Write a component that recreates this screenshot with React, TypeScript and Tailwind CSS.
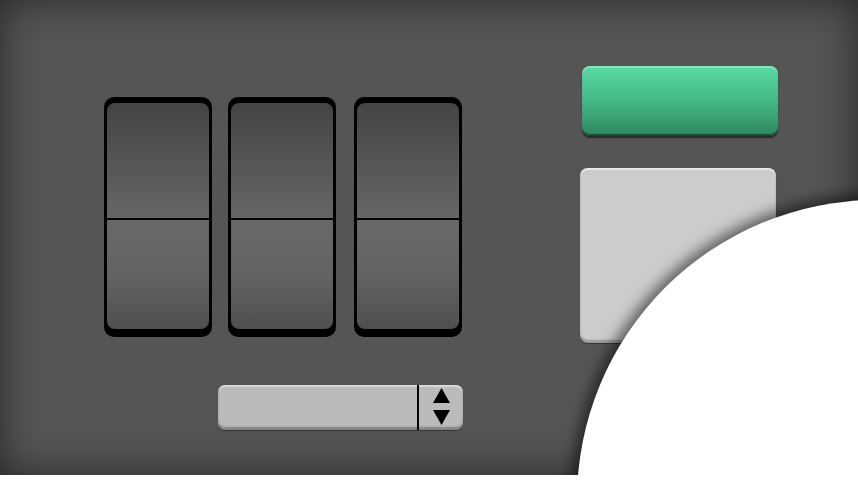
import React from "react";

function FlipCard({ className = "" }: { className?: string }) {
  return (
    <div className={`w-[108px] h-[240px] rounded-[10px] bg-black pt-[6px] px-[3px] pb-[8px] ${className}`}>
      <div className="flex h-full flex-col overflow-hidden rounded-[8px]">
        <div className="h-[115px] bg-gradient-to-b from-[#444444] to-[#666666]" />
        <div className="mx-[1px] h-[2px] bg-black" />
        <div className="flex-1 bg-gradient-to-b from-[#686868] via-[#636363] to-[#4f4f4f]" />
      </div>
    </div>
  );
}

function Stepper() {
  return (
    <div className="flex h-[45px] w-[245px] overflow-hidden rounded-[7px] bg-[#bbbbbb] shadow-[inset_0_2px_1px_rgba(255,255,255,0.45),inset_0_-3px_2px_rgba(0,0,0,0.3),0_1px_1px_rgba(0,0,0,0.35)]">
      <div className="flex-1" />
      <div className="w-[2px] bg-black" />
      <div className="flex w-[44px] flex-col items-center justify-center gap-[7px] pb-[2px]">
        <svg width="17" height="15" viewBox="0 0 17 15">
          <polygon points="8.5,0 17,15 0,15" fill="#000" />
        </svg>
        <svg width="17" height="15" viewBox="0 0 17 15">
          <polygon points="0,0 17,0 8.5,15" fill="#000" />
        </svg>
      </div>
    </div>
  );
}

export default function App() {
  return (
    <div className="bg-white">
      <div className="relative flex h-[475px] w-full items-start overflow-hidden bg-[#555555] shadow-[inset_0_0_40px_rgba(0,0,0,0.55)]">
        {/* Flip digits + selector */}
        <div className="ml-[104px] mt-[97px] flex flex-col">
          <div className="flex gap-[16px]">
            <FlipCard />
            <FlipCard />
            <FlipCard className="ml-[2px]" />
          </div>
          <div className="ml-[114px] mt-[48px]">
            <Stepper />
          </div>
        </div>

        {/* Buttons */}
        <div className="ml-[117px] mt-[66px] flex flex-col gap-[32px]">
          <div className="ml-[2px] h-[70px] w-[196px] rounded-[8px] bg-gradient-to-b from-[#58dba4] via-[#46b985] to-[#2f8660] shadow-[inset_0_2px_1px_rgba(255,255,255,0.3),inset_0_-2px_1px_rgba(0,0,0,0.45),0_2px_1px_rgba(0,0,0,0.5)]" />
          <div className="h-[175px] w-[196px] rounded-[8px] bg-[#cccccc] shadow-[inset_0_2px_1px_rgba(255,255,255,0.55),inset_0_-3px_2px_rgba(0,0,0,0.25),0_1px_1px_rgba(0,0,0,0.4)]" />
        </div>

        {/* Overlay disc */}
        <div className="absolute left-[577px] top-[200px] h-[600px] w-[606px] rounded-full bg-white shadow-[0_0_14px_6px_rgba(0,0,0,0.55)]" />
      </div>
    </div>
  );
}
